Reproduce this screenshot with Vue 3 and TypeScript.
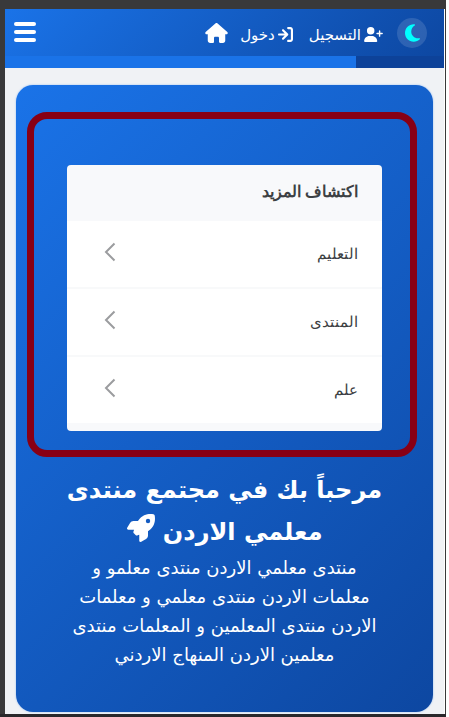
<script setup lang="ts">
interface Topic {
  label: string
}

const topics: Topic[] = [{ label: 'التعليم' }, { label: 'المنتدى' }, { label: 'علم' }]

const welcomeTitle: string[] = ['مرحباً بك في مجتمع منتدى', 'معلمي الاردن']

const welcomeLines: string[] = [
  'منتدى معلمي الاردن منتدى معلمو و',
  'معلمات الاردن منتدى معلمي و معلمات',
  'الاردن منتدى المعلمين و المعلمات منتدى',
  'معلمين الاردن المنهاج الاردني',
]
</script>

<template>
  <div class="frame">
    <div class="screen" dir="rtl">
      <header class="topbar">
        <nav class="nav">
          <button class="theme" type="button" aria-label="الوضع الليلي">
            <svg viewBox="0 0 384 512" width="15" height="20">
              <path fill="#00ffff" d="M223.500 32C100 32 0 132.300 0 256s100 224 223.500 224c60.600 0 115.500-24.200 155.800-63.400 5-4.900 6.300-12.500 3.100-18.700s-10.100-9.700-17-8.500c-9.800 1.700-19.800 2.600-30.100 2.600-96.900 0-175.500-78.800-175.500-176 0-65.800 36-123.100 89.300-153.300 6.100-3.500 9.200-10.500 7.700-17.300s-7.300-11.900-14.300-12.500c-6.300-.5-12.600-.8-19-.8z" />
            </svg>
          </button>
          <a class="link register" href="#register">
            <svg viewBox="0 0 640 512" width="19" height="15">
              <path fill="currentColor" d="M96 128a128 128 0 1 1 256 0 128 128 0 1 1-256 0zM0 482.300C0 383.800 79.800 304 178.300 304h91.400C368.200 304 448 383.800 448 482.300c0 16.400-13.300 29.700-29.700 29.700H29.700C13.300 512 0 498.700 0 482.300zM504 312v-64h-64c-13.300 0-24-10.700-24-24s10.700-24 24-24h64v-64c0-13.300 10.700-24 24-24s24 10.700 24 24v64h64c13.300 0 24 10.700 24 24s-10.700 24-24 24h-64v64c0 13.300-10.700 24-24 24s-24-10.700-24-24z" />
            </svg>
            <span>التسجيل</span>
          </a>
          <a class="link login" href="#login">
            <svg viewBox="0 0 448 448" width="15" height="15">
              <path fill="currentColor" d="M304 64h64c8.800 0 16 7.200 16 16v288c0 8.800-7.200 16-16 16h-64c-17.700 0-32 14.300-32 32s14.300 32 32 32h64c44.200 0 80-35.800 80-80V80c0-44.200-35.800-80-80-80h-64c-17.700 0-32 14.300-32 32s14.300 32 32 32zm-4 183c12.500-12.500 12.500-32.800 0-45.300l-128-128c-12.500-12.500-32.800-12.500-45.300 0s-12.500 32.800 0 45.300L200 192H32c-17.700 0-32 14.300-32 32s14.300 32 32 32h168l-73.400 73.400c-12.500 12.500-12.500 32.800 0 45.300s32.800 12.500 45.300 0z" />
            </svg>
            <span>دخول</span>
          </a>
          <a class="home" href="#home" aria-label="الرئيسية">
            <svg viewBox="0 0 576 512" width="23" height="20">
              <path fill="currentColor" d="M575.800 255.500c0 18-15 32.100-32 32.100h-32l.7 160.200c.2 35.500-28.500 64.300-64 64.300H384c-17.700 0-32-14.300-32-32V384c0-17.700-14.300-32-32-32h-64c-17.700 0-32 14.300-32 32v96c0 17.700-14.300 32-32 32h-64c-35.300 0-64-28.700-64-64V287.600H32c-18 0-32-14-32-32.100 0-9 3-17 10-24L266.400 8c7-7 15-8 22-8s15 2 21 7l255.400 224.500c8 7 12 15 11 24z" />
            </svg>
          </a>
        </nav>
        <button class="menu" type="button" aria-label="القائمة">
          <span></span><span></span><span></span>
        </button>
      </header>
      <div class="progress"><div class="progress-fill"></div></div>

      <main class="hero">
        <section class="highlight">
          <div class="discover">
            <h2 class="discover-title">اكتشاف المزيد</h2>
            <a v-for="topic in topics" :key="topic.label" class="topic" href="#topic">
              <span>{{ topic.label }}</span>
              <svg viewBox="0 0 12 20" width="12" height="20">
                <path d="M10.500 1.500 2 10l8.500 8.500" fill="none" stroke="#9b9c9f" stroke-width="2" />
              </svg>
            </a>
          </div>
        </section>
        <h1 class="title">
          <span class="line">{{ welcomeTitle[0] }}</span>
          <span class="line">
            {{ welcomeTitle[1] }}
            <svg class="rocket" viewBox="0 0 512 512" width="28" height="28">
              <path fill="currentColor" fill-rule="evenodd" d="M156.600 384.900 125.700 354c-8.500-8.500-11.500-20.800-7.700-32.200 3-8.900 7-20.500 11.800-33.800H24c-8.600 0-16.600-4.600-20.900-12.100s-4.200-16.700.2-24.100l52.500-88.500c13-21.900 36.500-35.300 61.900-35.300h82.300c2.400-4 4.800-7.700 7.200-11.300C289.100-4.100 411.100-8.100 483.900 5.300c11.600 2.100 20.600 11.200 22.800 22.800 13.400 72.900 9.300 194.800-111.400 276.700-3.500 2.400-7.300 4.800-11.300 7.200v82.300c0 25.400-13.400 49-35.300 61.900l-88.500 52.500c-7.400 4.400-16.600 4.500-24.100.2S224 496.700 224 488V380.800c-14.100 4.900-26.400 8.900-35.700 11.900-11.200 3.600-23.400.5-31.800-7.800zM384 168a40 40 0 1 0 0-80 40 40 0 1 0 0 80z" />
            </svg>
          </span>
        </h1>
        <p class="intro">
          <span v-for="line in welcomeLines" :key="line" class="line">{{ line }} </span>
        </p>
      </main>
    </div>
  </div>
</template>

<style>
html,
body,
#app {
  height: 100%;
}

body {
  margin: 0;
  background: #fff;
}
</style>

<style scoped>
.frame {
  box-sizing: border-box;
  min-height: 100%;
  margin-right: 3px;
  padding: 9px 1px 0 5px;
  background: #39393a;
  border-bottom: 3px solid #29282b;
  display: flex;
}

.screen {
  flex: 1;
  min-width: 0;
  border-right: 1px solid #fff;
  background: #f0f2f5;
  font-family: 'DejaVu Sans', sans-serif;
  color: #fff;
}

.topbar {
  display: flex;
  align-items: center;
  justify-content: space-between;
  height: 47px;
  padding: 0 17px 0 9px;
  background: linear-gradient(135deg, #1a73e8, #0d47a1);
}

.nav {
  display: flex;
  align-items: center;
}

.theme {
  display: flex;
  align-items: center;
  justify-content: center;
  width: 30px;
  height: 30px;
  padding: 0;
  border: 0;
  border-radius: 50%;
  background: rgba(255, 255, 255, 0.13);
}

.link {
  display: flex;
  align-items: center;
  gap: 3px;
  padding-top: 4px;
  color: #fff;
  font-size: 15px;
  line-height: 20px;
  text-decoration: none;
  white-space: nowrap;
}

.home {
  display: flex;
  margin-right: 12px;
  color: #fff;
}

.register {
  margin-right: 14px;
}

.login {
  margin-right: 16px;
}

.menu {
  display: flex;
  flex-direction: column;
  gap: 4px;
  width: 22px;
  margin-bottom: 2px;
  padding: 0;
  border: 0;
  background: none;
}

.menu span {
  height: 4px;
  border-radius: 2px;
  background: #fff;
}

.progress {
  height: 12px;
  direction: ltr;
  background: #0d4299;
}

.progress-fill {
  width: 80%;
  height: 100%;
  background: #1a73e8;
}

.hero {
  margin: 17px 11px 2px;
  padding: 27px 0 43px;
  border-radius: 17px;
  background: linear-gradient(135deg, #1a73e8, #0d47a1);
  box-shadow: 0 0 2px #8db9f4;
}

.highlight {
  margin: 0 16px 0 11px;
  padding: 46px 28px 19px 33px;
  border: 7px solid #880015;
  border-radius: 20px;
}

.discover {
  overflow: hidden;
  padding-bottom: 8px;
  border-radius: 4px;
  background: #f8f9fb;
  color: #3c4043;
  font-family: 'Liberation Sans', Arial, sans-serif;
}

.discover-title {
  height: 56px;
  margin: 0;
  padding: 0 24px;
  font-size: 16px;
  line-height: 54px;
}

.topic {
  display: flex;
  align-items: center;
  justify-content: space-between;
  height: 66px;
  padding: 0 24px 0 37px;
  border-bottom: 2px solid #f8f9fa;
  background: #fff;
  color: #3c4043;
  font-size: 15px;
  text-decoration: none;
}

.topic:last-child {
  border-bottom: 0;
}

.topic svg {
  margin-bottom: 4px;
}

.title {
  margin: 12px 0 0;
  font-size: 24px;
  line-height: 42px;
  text-align: center;
}

.line {
  display: block;
  white-space: nowrap;
}

.rocket {
  vertical-align: -2px;
}

.intro {
  margin: 0;
  font-size: 18px;
  line-height: 29px;
  text-align: center;
}
</style>
